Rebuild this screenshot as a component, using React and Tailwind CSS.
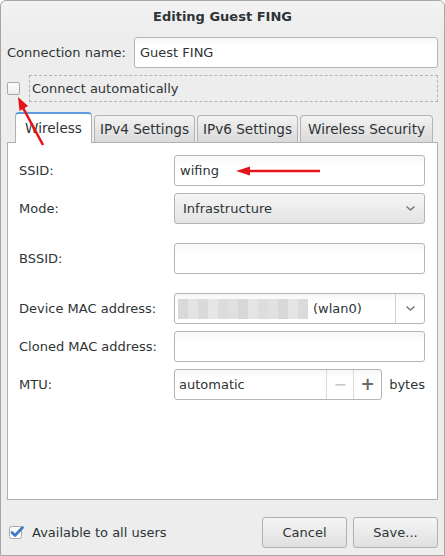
import React from "react";

const font = { fontFamily: '"DejaVu Sans", "Liberation Sans", sans-serif' };

const Entry = ({ children, className = "" }) => (
    <div
        className={`h-[31px] flex items-center px-[5px] border border-[#b6b6b6] rounded-[3px] bg-gradient-to-b from-[#f7f7f7] to-white to-[30%] ${className}`}
    >
        {children}
    </div>
);

const Chevron = () => (
    <svg width="11" height="7" viewBox="0 0 11 7">
        <path d="M1.5 1.5 L5.5 5 L9.5 1.5" fill="none" stroke="#7a7a7a" strokeWidth="1.6" />
    </svg>
);

const Row = ({ label, className = "", children }) => (
    <div className={`flex items-center ${className}`}>
        <span className="w-[155px] shrink-0">{label}</span>
        {children}
    </div>
);

// pixelated blur for the hidden mac
const blurShades = ["#d9d9d9", "#e3e3e3", "#dadada", "#e6e6e6", "#dcdcdc", "#e0e0e0", "#d7d7d7", "#e4e4e4", "#dddddd", "#e1e1e1", "#d8d8d8", "#e5e5e5", "#dbdbdb"];

const tabs = [
    { name: "IPv4 Settings", w: "w-[101px]" },
    { name: "IPv6 Settings", w: "w-[101px]" },
    { name: "Wireless Security", w: "w-[133px]" },
];

export default function App() {
    return (
        <div className="relative w-[445px] h-[556px] bg-white text-[13px] text-[#2e3436]" style={font}>
            <div className="h-full flex flex-col border border-[#a6a6a6] rounded-t-[6px] bg-[#ededed]">
                <div className="h-[31px] shrink-0 flex items-center justify-center font-bold rounded-t-[6px] bg-gradient-to-b from-[#f3f3f3] to-[#ededed]">
                    Editing Guest FING
                </div>

                <div className="mt-[5px] flex items-center px-[6px]">
                    <span className="w-[127px] shrink-0">Connection name:</span>
                    <Entry className="flex-1">Guest FING</Entry>
                </div>

                <div className="mt-[7px] flex items-center pl-[6px] pr-[6px]">
                    <div className="w-[13px] h-[13px] rounded-[2px] border border-[#a8a8a8] bg-gradient-to-b from-white to-[#ececec]" />
                    <div className="ml-[9px] flex-1 h-[27px] flex items-center pl-[2px] border border-dashed border-[#b4b4b4]">
                        Connect automatically
                    </div>
                </div>

                <div className="mt-[10px] h-[30px] flex items-end pl-[14px] gap-[2px] text-[13.6px]">
                    <div className="relative z-10 w-[77px] h-[31px] -mb-px flex items-center justify-center bg-white border border-b-0 border-[#b0b0b0] border-t-[#5d9be0] border-t-2 rounded-t-[4px]">
                        Wireless
                    </div>
                    {tabs.map((t) => (
                        <div
                            key={t.name}
                            className={`${t.w} h-[27px] flex items-center justify-center border border-b-0 border-[#b4b4b4] rounded-t-[4px] bg-gradient-to-b from-[#f2f2f2] to-[#dadada]`}
                        >
                            {t.name}
                        </div>
                    ))}
                </div>

                <div className="mx-[6px] h-[358px] shrink-0 border border-[#b0b0b0] bg-white pt-[12px] pl-[11px] pr-[12px]">
                    <Row label="SSID:">
                        <Entry className="flex-1">wifing</Entry>
                    </Row>
                    <Row label="Mode:" className="mt-[7px]">
                        <div className="flex-1 h-[31px] flex items-center justify-between pl-[8px] pr-[8px] border border-[#b4b4b4] rounded-[3px] bg-gradient-to-b from-[#f6f6f6] to-[#e3e3e3]">
                            <span>Infrastructure</span>
                            <Chevron />
                        </div>
                    </Row>
                    <Row label="BSSID:" className="mt-[19px]">
                        <Entry className="flex-1" />
                    </Row>
                    <Row label="Device MAC address:" className="mt-[19px]">
                        <div className="flex-1 h-[31px] flex border border-[#b6b6b6] rounded-[3px] bg-gradient-to-b from-[#f7f7f7] to-white to-[30%]">
                            <div className="flex-1 flex items-center pl-[3px]">
                                <div className="flex h-[20px]">
                                    {blurShades.map((c, i) => (
                                        <div key={i} className="w-[10px] h-full" style={{ background: c }} />
                                    ))}
                                </div>
                                <span className="ml-[5px]">(wlan0)</span>
                            </div>
                            <div className="w-[29px] flex items-center justify-center border-l border-[#d0d0d0]">
                                <Chevron />
                            </div>
                        </div>
                    </Row>
                    <Row label="Cloned MAC address:" className="mt-[7px]">
                        <Entry className="flex-1" />
                    </Row>
                    <Row label="MTU:" className="mt-[7px]">
                        <div className="w-[210px] h-[31px] flex border border-[#b6b6b6] rounded-[3px] bg-gradient-to-b from-[#f7f7f7] to-white to-[30%]">
                            <div className="flex-1 flex items-center pl-[4px]">automatic</div>
                            <div className="w-[27px] flex items-center justify-center border-l border-[#dcdcdc] text-[#c8c8c8] text-[16px]">
                                −
                            </div>
                            <div className="w-[28px] flex items-center justify-center border-l border-[#dcdcdc] text-[#6a6a6a] text-[17px] font-bold">
                                +
                            </div>
                        </div>
                        <span className="ml-[7px]">bytes</span>
                    </Row>
                </div>

                <div className="mt-[17px] h-[31px] flex items-center pl-[8px] pr-[6px]">
                    <svg width="15" height="15" viewBox="0 0 15 15">
                        <rect x="0.5" y="1.5" width="12" height="12" rx="2" fill="#fafafa" stroke="#a8a8a8" />
                        <path d="M3 7.5 L6 10.5 L13.5 2.5" fill="none" stroke="#3f78c6" strokeWidth="2.6" strokeLinecap="round" strokeLinejoin="round" />
                    </svg>
                    <span className="ml-[8px]">Available to all users</span>
                    <div className="ml-auto flex gap-[6px]">
                        <button className="w-[85px] h-[31px] border border-[#b0b0b0] rounded-[3px] bg-gradient-to-b from-[#f5f5f5] to-[#e0e0e0]">
                            Cancel
                        </button>
                        <button className="w-[85px] h-[31px] border border-[#b0b0b0] rounded-[3px] bg-gradient-to-b from-[#f5f5f5] to-[#e0e0e0]">
                            Save...
                        </button>
                    </div>
                </div>
            </div>

            {/* red annotation arrows */}
            <svg className="absolute inset-0 z-20 pointer-events-none" width="445" height="556">
                <line x1="43" y1="145" x2="22" y2="106" stroke="#e5141b" strokeWidth="2.6" />
                <polygon points="18,97 28,106 19.5,111" fill="#e5141b" />
                <line x1="320" y1="171" x2="246" y2="171" stroke="#e5141b" strokeWidth="2.4" />
                <polygon points="236,171 250,166.5 250,175.5" fill="#e5141b" />
            </svg>
        </div>
    );
}
